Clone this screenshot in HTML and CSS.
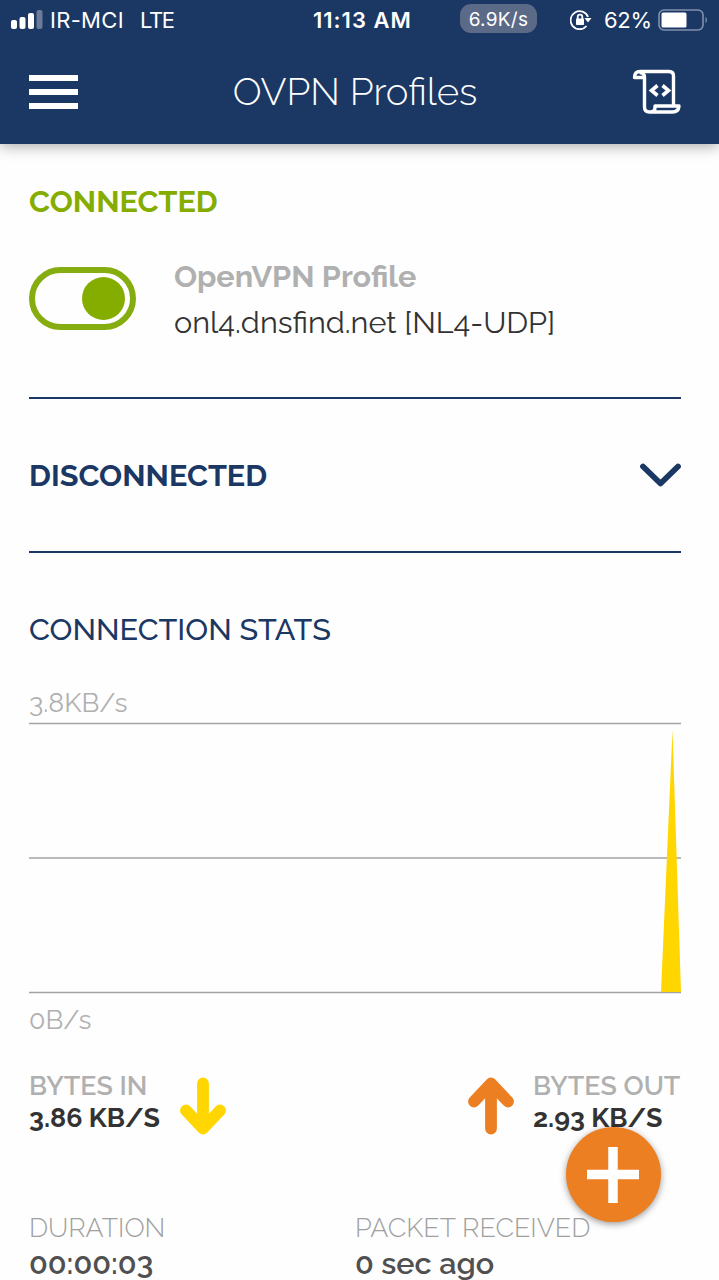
FILE: index.html
```html
<!DOCTYPE html>
<html lang="en">
<head>
    <meta charset="UTF-8">
    <meta name="viewport" content="width=device-width, initial-scale=1.0">
    <title>OVPN Profiles</title>
    <link rel="stylesheet" href="styles.css">
</head>
<body>

<header class="header">
    <div class="status-bar">
        <svg class="signal" width="32" height="20" viewBox="0 0 32 20" fill="#fff">
            <rect x="0" y="10" width="6" height="9" rx="2"/>
            <rect x="8.5" y="7" width="6" height="12" rx="2"/>
            <rect x="17" y="3" width="6" height="16" rx="2"/>
            <rect x="25.5" y="0" width="6" height="19" rx="2" opacity="0.35"/>
        </svg>
        <span class="carrier">IR-MCI</span>
        <span class="network">LTE</span>
        <span class="time">11:13 AM</span>
        <span class="speed">6.9K/s</span>
        <svg class="lock" width="22" height="20" viewBox="0 0 22 20" fill="none" stroke="#fff" stroke-width="1.8">
            <path d="M18 7A9 9 0 1 0 16.5 16"/>
            <path d="M14.500 8h7l-3.500 4.500z" fill="#fff" stroke="none"/>
            <rect x="6" y="8.5" width="8" height="6.5" rx="0.8" fill="#fff" stroke="none"/>
            <path d="M7.700 9V7a2.300 2.300 0 0 1 4.600 0v2"/>
        </svg>
        <span class="percent">62%</span>
        <svg class="battery" width="51" height="22" viewBox="0 0 51 22">
            <rect x="1" y="1" width="44" height="20" rx="5" fill="none" stroke="#8291ae" stroke-width="1.6"/>
            <rect x="3.5" y="3.5" width="25" height="15" rx="1.5" fill="#fff"/>
            <path d="M47.500 7.500q3 3.500 0 7z" fill="#8291ae"/>
        </svg>
    </div>
    <div class="nav">
        <div class="menu">
            <span></span>
            <span></span>
            <span></span>
        </div>
        <h1>OVPN Profiles</h1>
        <svg class="log" width="49" height="46" viewBox="0 0 49 46" fill="none" stroke="#fff" stroke-width="3.4" stroke-linejoin="round">
            <path d="M11.500 8.500H2.500Q2.500 2.500 8 2.500H37q4.500 0 4.500 4.500v29"/>
            <path d="M7.500 3.500q5 0 5 5V38q0 5 5 5h23q6 0 6.500-6H23v1.500q0 4.500-4.500 4.500"/>
            <path d="M25.500 16.500l-6 5 6 5M30.500 16.500l6 5-6 5" stroke-width="3.6" stroke-linejoin="miter"/>
        </svg>
    </div>
</header>

<main class="content">
    <section class="connected">
        <h2 class="title-connected">CONNECTED</h2>
        <div class="profile">
            <div class="toggle"><div class="knob"></div></div>
            <div>
                <div class="profile-type">OpenVPN Profile</div>
                <div class="profile-name">onl4.dnsfind.net [NL4-UDP]</div>
            </div>
        </div>
    </section>

    <section class="disconnected">
        <h2 class="title-disconnected">DISCONNECTED</h2>
        <svg width="42" height="26" viewBox="0 0 42 26" fill="none" stroke="#1b3764" stroke-width="5.8" stroke-linecap="round" stroke-linejoin="round">
            <path d="M4 4.500L21.500 21.500 39 4.500"/>
        </svg>
    </section>

    <section class="stats">
        <h2 class="title-stats">CONNECTION STATS</h2>
        <div class="scale scale-max">3.8KB/s</div>
        <svg class="chart" width="652" height="272" viewBox="0 0 652 272">
            <path d="M0 1.500h652M0 136h652M0 270.500h652" stroke="#a3a3a3" stroke-width="1.7"/>
            <path d="M632 270L643.500 8 652 270z" fill="#ffd600"/>
        </svg>
        <div class="scale scale-min">0B/s</div>

        <div class="bytes">
            <div class="bytes-item">
                <div>
                    <div class="bytes-label">BYTES IN</div>
                    <div class="bytes-value">3.86 KB/S</div>
                </div>
                <svg class="arrow" width="46" height="58" viewBox="0 0 46 58" fill="none" stroke="#ffd600" stroke-width="11.8" stroke-linecap="round" stroke-linejoin="round">
                    <path d="M23 6.500v44M6 33.500l17 18 17-18"/>
                </svg>
            </div>
            <div class="bytes-item">
                <svg class="arrow" width="46" height="58" viewBox="0 0 46 58" fill="none" stroke="#ec7f22" stroke-width="11.8" stroke-linecap="round" stroke-linejoin="round">
                    <path d="M23 51.500V7.500M6 24.500l17-18 17 18"/>
                </svg>
                <div>
                    <div class="bytes-label">BYTES OUT</div>
                    <div class="bytes-value">2.93 KB/S</div>
                </div>
            </div>
        </div>

        <div class="details">
            <div>
                <div class="detail-label">DURATION</div>
                <div class="detail-value">00:00:03</div>
            </div>
            <div>
                <div class="detail-label">PACKET RECEIVED</div>
                <div class="detail-value">0 sec ago</div>
            </div>
        </div>
    </section>
</main>

<div class="add-button">
    <svg width="52" height="56" viewBox="0 0 52 56" fill="none" stroke="#fff" stroke-width="9.5">
        <path d="M26 0v56M0 27.500h52"/>
    </svg>
</div>

</body>
</html>
```
FILE: styles.css
```css
* {
    box-sizing: border-box;
}

body {
    font-family: Raleway, Lato, sans-serif;
    background-color: #fefefe;
    margin: 0;
    height: 1280px;
    overflow: hidden;
}

h1, h2 {
    margin: 0;
}

svg {
    display: block;
    flex-shrink: 0;
}

.header {
    height: 144px;
    background-color: #1b3764;
    color: white;
    box-shadow: 0 2px 14px rgba(0, 0, 0, 0.35);
}

.status-bar {
    display: flex;
    align-items: center;
    height: 40px;
    padding-left: 11px;
    font-family: Inter, sans-serif;
    font-size: 22px;
    white-space: nowrap;
}

.carrier {
    width: 90px;
    margin-left: 7px;
    letter-spacing: 0.3px;
}

.network {
    width: 172px;
    letter-spacing: -1.4px;
}

.time {
    width: 148px;
    padding-left: 1px;
    font-weight: 600;
    letter-spacing: 1px;
}

.speed {
    width: 77px;
    height: 29px;
    margin-top: -3px;
    border-radius: 11px;
    background-color: #5b6a87;
    font-size: 19px;
    letter-spacing: 0.3px;
    line-height: 31px;
    text-align: center;
}

.lock {
    margin-left: 33px;
}

.percent {
    width: 54px;
    margin-left: 12px;
    letter-spacing: -0.3px;
}

.nav {
    display: flex;
    align-items: center;
    justify-content: space-between;
    height: 103px;
    padding: 0 38px 0 29px;
}

.menu {
    display: flex;
    flex-direction: column;
    gap: 8px;
}

.menu span {
    width: 49px;
    height: 6px;
    background-color: white;
}

.nav h1 {
    font-size: 38.3px;
    font-weight: 300;
}

.content {
    padding: 0 38px 0 29px;
    color: #333;
}

.content h2 {
    font-size: 30.6px;
    line-height: 40px;
}

.connected {
    height: 255px;
    padding-top: 37px;
    border-bottom: 2px solid #1b3764;
}

.content .title-connected {
    color: #85ad00;
}

.profile {
    display: flex;
    gap: 38px;
    margin-top: 34px;
}

.toggle {
    display: flex;
    align-items: center;
    justify-content: flex-end;
    width: 107px;
    height: 63px;
    margin-top: 12px;
    padding-right: 5px;
    border: 6px solid #85ad10;
    border-radius: 32px;
}

.knob {
    width: 43px;
    height: 43px;
    border-radius: 50%;
    background-color: #85ad00;
}

.profile-type {
    font-size: 30.6px;
    font-weight: bold;
    line-height: 42px;
    color: #b0b0b0;
}

.profile-name {
    font-size: 30.6px;
    line-height: 50px;
    white-space: nowrap;
}

.disconnected {
    display: flex;
    align-items: center;
    justify-content: space-between;
    height: 154px;
    padding-bottom: 1px;
    border-bottom: 2px solid #1b3764;
    color: #1b3764;
}

.stats {
    padding-top: 56px;
}

.content .title-stats {
    font-weight: 500;
    color: #1b3764;
}

.scale {
    font-size: 26.8px;
    line-height: 30px;
    color: #b0b0b0;
}

.scale-max {
    margin-top: 39px;
}

.chart {
    margin-top: 4px;
}

.scale-min {
    margin-top: 11px;
}

.bytes {
    display: flex;
    justify-content: space-between;
    margin-top: 35px;
}

.bytes-item {
    display: flex;
    gap: 20px;
    white-space: nowrap;
}

.bytes-item > div {
    width: 131px;
}

.bytes-item:last-child > div {
    width: 148px;
}

.arrow {
    margin-top: 7px;
}

.bytes-item:last-child .arrow {
    margin-right: -1px;
}

.bytes-label {
    font-size: 26.8px;
    font-weight: 600;
    line-height: 32px;
    color: #b0b0b0;
}

.bytes-value {
    font-size: 26.8px;
    font-weight: bold;
    line-height: 32px;
}

.details {
    display: grid;
    grid-template-columns: 1fr 1fr;
    margin-top: 75px;
}

.detail-label {
    font-size: 26.8px;
    font-weight: 300;
    line-height: 36px;
    color: #a0a0a0;
    white-space: nowrap;
}

.detail-value {
    font-size: 30.6px;
    font-weight: 600;
    line-height: 34px;
    color: #505050;
}

/* Floating button over the stats */
.add-button {
    position: absolute;
    left: 566px;
    top: 1127px;
    display: flex;
    align-items: center;
    justify-content: center;
    width: 95px;
    height: 95px;
    border-radius: 50%;
    background-color: #ec7f22;
    box-shadow: 0 2px 7px rgba(0, 0, 0, 0.4);
}

.add-button svg {
    margin-right: 2px;
}
```
